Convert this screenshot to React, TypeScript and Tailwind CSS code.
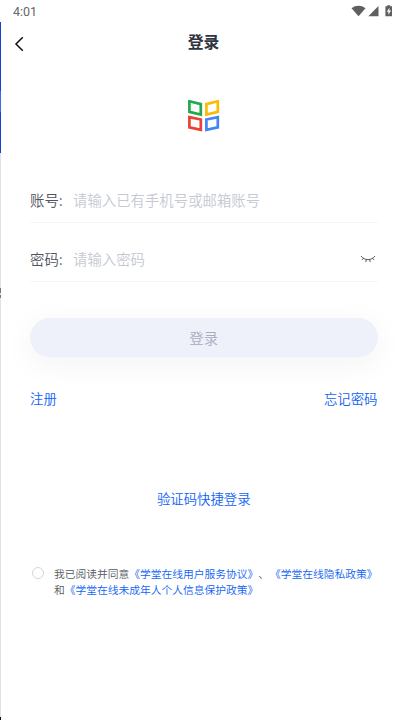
import React, { useState } from 'react'

interface FieldProps {
  label: string
  placeholder: string
  type?: string
  children?: React.ReactNode
}

function StatusBar() {
  return (
    <div className="flex h-[22px] items-center justify-between pl-[13px] pr-[12px] font-['Roboto',sans-serif] text-[12.5px] font-normal text-[#666666]">
      <span className="pt-px leading-[22px]">4:01</span>
      <svg className="h-[12px] w-[42px]" viewBox="0 0 42 12" fill="#5f5f5f">
        <path d="M0.5 3.3C4.6 0 10.4 0 14.5 3.3L7.5 11.3Z" />
        <path d="M27.5 1V11.2H17.3Z" />
        <path
          fillRule="evenodd"
          d="M36.2 0.3h3v1h1.8v10h-6.6v-10h1.8zM38.4 2.8l-2.6 4h1.6v2.9l2.7-4.1h-1.7z"
        />
      </svg>
    </div>
  )
}

function Header() {
  return (
    <header className="grid h-[41px] grid-cols-[40px_1fr_40px] items-center pl-px">
      <button aria-label="返回" className="pl-[11px] pt-[3px]">
        <svg className="h-[16px] w-[12px]" viewBox="0 0 12 16" fill="none" stroke="#111111" strokeWidth="1.5">
          <path d="M9.8 1.3L3 8L9.8 14.7" />
        </svg>
      </button>
      <h1 className="pb-[2px] text-center text-[15.8px] font-bold leading-[38px] text-[#2f3440]">登录</h1>
    </header>
  )
}

function Logo() {
  return (
    <svg className="h-[33px] w-[32px]" viewBox="0 0 32 33" fill="none" strokeWidth="2.7">
      <path stroke="#22a94f" d="M1.4 1.3L12.8 4.1V14.6L1.4 11.9Z" />
      <path stroke="#fbbc05" d="M18.4 4.1L29.8 1.3V11.9L18.4 14.6Z" />
      <path stroke="#ea4335" d="M1.4 17.1L12.8 19.5V29.9L1.4 27.3Z" />
      <path stroke="#4285f4" d="M18.4 19.5L29.8 17.1V27.3L18.4 29.9Z" />
    </svg>
  )
}

function ClosedEye() {
  return (
    <svg className="h-[8px] w-[16px]" viewBox="0 0 16 8" fill="none" stroke="#555762" strokeWidth="1">
      <path d="M1 1C4.5 5.8 11.5 5.8 15 1M3.6 3L2.2 4.8M6.3 4.6L5.8 7M9.7 4.6L10.2 7M12.4 3L13.8 4.8" />
    </svg>
  )
}

function Field({ label, placeholder, type = 'text', children }: FieldProps) {
  return (
    <label className="flex h-[59px] items-center border-b border-[#f6f6f7] pt-[13px] text-[14.4px]">
      <span className="w-[43px] shrink-0 text-[#50525e]">{label}:</span>
      <input
        type={type}
        placeholder={placeholder}
        className="h-[30px] min-w-0 flex-1 bg-transparent outline-none placeholder:text-[#c5c8d3]"
      />
      {children}
    </label>
  )
}

export default function App() {
  const [agreed, setAgreed] = useState(false)

  return (
    <div className="flex h-[720px] w-[405px] flex-col overflow-hidden bg-white font-['Noto_Sans_CJK_SC',sans-serif] font-[350] [text-spacing-trim:space-all]">
      <StatusBar />
      <div className="flex flex-1">
        {/* Edge of the page underneath */}
        <div className="flex w-px shrink-0 flex-col bg-[#e2e2e2]">
          <div className="h-[69px] bg-[#1540d8]" />
          <div className="h-[21px] bg-[#4169e1]" />
          <div className="h-[41px] bg-[#1540d8]" />
          <div className="mt-[135px] h-[5px] bg-[#77777b]" />
          <div className="mt-[2px] h-[3px] bg-[#77777b]" />
          <div className="mt-auto h-[3px] bg-[#111111]" />
        </div>
        <div className="flex min-w-0 flex-1 flex-col">
          <Header />
          <main className="flex flex-col pl-[29px] pr-[27.5px]">
            <div className="flex justify-center pl-px pt-[37px]">
              <Logo />
            </div>
            <div className="pt-[31px]">
              <Field label="账号" placeholder="请输入已有手机号或邮箱账号" />
              <Field label="密码" placeholder="请输入密码" type="password">
                <button aria-label="显示密码" className="mr-[1.5px] pt-px">
                  <ClosedEye />
                </button>
              </Field>
            </div>
            <button className="mt-[36px] h-[39px] rounded-full bg-[#eef1fa] text-[14.4px] text-[#a9acbd] shadow-[0_7px_32px_rgba(0,0,0,0.05)]">
              登录
            </button>
            <div className="mt-[31px] flex justify-between text-[13.4px] leading-[20px] text-[#0f62f5]">
              <a href="#register">注册</a>
              <a href="#forgot">忘记密码</a>
            </div>
            <a href="#sms" className="mt-[80px] text-center text-[13.4px] leading-[20px] text-[#0f62f5]">
              验证码快捷登录
            </a>
            <div className="mt-[58px] flex pl-[2px]">
              <button
                role="checkbox"
                aria-checked={agreed}
                aria-label="同意协议"
                onClick={() => setAgreed(!agreed)}
                className={`mr-[10px] mt-px size-[12px] shrink-0 rounded-full border border-[#d5d6da] ${agreed ? 'bg-[#0f62f5]' : 'bg-white'}`}
              />
              <p className="whitespace-nowrap text-[10.75px] leading-[16px] text-[#555762]">
                我已阅读并同意<span className="text-[#0f62f5]">《学堂在线用户服务协议》</span>、
                <span className="ml-px text-[#0f62f5]">《学堂在线隐私政策》</span>
                <br />
                和<span className="text-[#0f62f5]">《学堂在线未成年人个人信息保护政策》</span>
              </p>
            </div>
          </main>
        </div>
      </div>
    </div>
  )
}
